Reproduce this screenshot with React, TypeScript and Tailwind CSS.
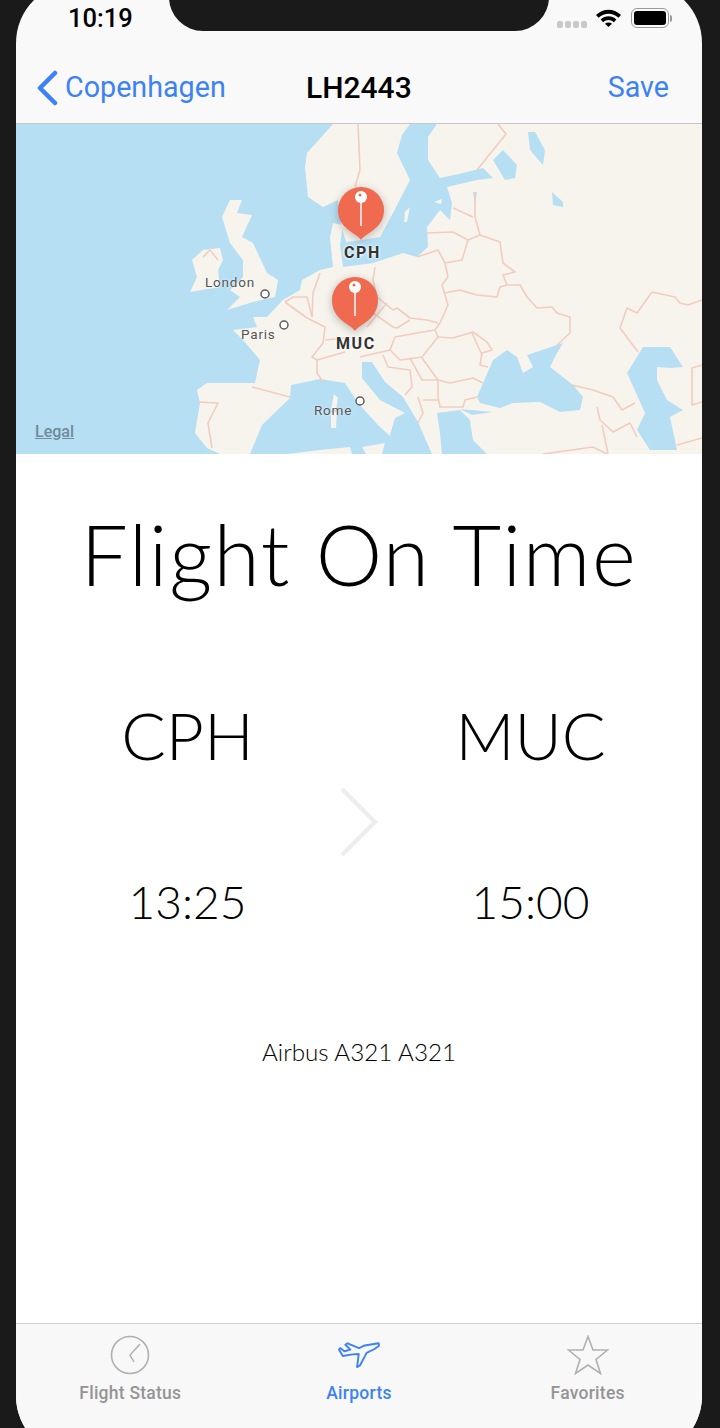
import React from 'react';

const FONT_UI = "font-['Roboto','Liberation_Sans',sans-serif]";
const FONT_BODY = "font-['Lato','Open_Sans',sans-serif]";

// --- MAP GEOMETRY (page coordinates) ---
const WATER = '#b7dff3';
const LAND = '#f7f4ee';
const BORDER = '#f1cdbf';

const land = [
  // continent, everything east is land
  '207,383 255,383 260,360 243,340 233,330 257,327 253,317 267,317 283,300 300,290 302,280 320,270 333,267 330,237 333,223 343,225 340,245 343,267 373,263 403,253 417,257 428,247 427,227 440,210 450,220 452,203 447,187 477,180 493,178 483,168 463,173 440,178 428,160 428,137 437,124 702,124 702,454 220,454 207,448 195,433 200,403 197,390',
  // scandinavia
  '333,124 307,153 305,167 308,197 323,207 338,200 341,225 346,242 362,240 380,237 393,213 410,180 397,153 402,135 410,124',
  // great britain
  '230,200 242,200 237,213 252,215 242,237 253,243 267,273 278,280 275,297 253,302 227,310 240,297 230,290 243,277 243,260 230,243 222,217',
  // ireland
  '203,250 220,248 223,260 218,270 220,287 190,292 197,277 192,260',
];

const seas = [
  // mediterranean
  '250,454 262,425 290,398 291,385 320,379 345,383 358,403 378,425 405,450 408,454',
  // adriatic + ionian
  '362,362 372,362 385,382 403,397 418,422 428,445 432,454 393,454 390,435 395,418 405,413 380,400 362,378',
  // aegean
  '437,413 460,410 470,420 473,440 487,454 442,454 440,433',
  '460,409 493,412 472,415',
  // black sea
  '477,397 493,360 507,350 517,357 523,373 533,367 527,355 563,343 557,353 550,367 573,385 583,397 580,410 560,412 540,402 513,403 500,408 480,403',
  // caspian
  '643,347 670,347 683,367 670,368 657,367 657,380 667,400 683,410 670,417 677,450 650,450 637,430 645,413 627,373',
  // lakes
  '493,160 503,150 517,165 515,178 505,180',
  '528,132 535,132 545,150 543,165 530,150',
  '552,192 563,202 563,207 553,205',
  '473,192 477,192 475,205',
];

const islands = [
  '334,394 338,398 336,410 331,410',
  '331,412 337,412 336,428 331,428',
  '362,447 385,443 382,454 366,454',
  '287,454 320,450 350,447 352,454',
  '405,212 410,207 407,222 404,222',
  '434,202 442,199 441,204',
  '487,454 470,425 480,415 560,412',
];

const borders = [
  '358,124 360,170 355,187',
  '498,124 506,134 477,170',
  '475,192 475,217 480,235',
  '453,208 473,217',
  '427,233 453,232 468,240 480,235',
  '480,235 500,242 503,263 515,272 503,275 507,285',
  '468,240 462,260 445,263 438,250 417,257',
  '445,263 448,277 442,285 448,305 440,323',
  '445,293 460,290 477,295 497,297 500,287 507,285 520,285 527,297 537,308 552,307 557,313 570,317 570,333 557,345',
  '375,267 373,280 377,297 393,310 397,308 410,318 427,320 438,323',
  '367,327 387,303',
  '373,313 393,327 397,328 410,320',
  '395,337 417,333 435,330 440,323',
  '395,337 390,350 400,360 422,357 438,337 435,330',
  '438,337 453,338 473,332 487,342 492,350 482,353 480,365 488,367',
  '472,333 482,355',
  '422,358 438,380 450,383 473,378 483,383',
  '438,380 438,397 440,407 463,407 465,400 477,397',
  '360,357 390,350',
  '383,355 388,367 410,370 412,387 405,395',
  '410,358 422,380 438,380',
  '418,397 423,413 418,423',
  '423,400 438,400',
  '572,385 593,390 613,397 622,410 635,403',
  '597,407 600,420 613,432 630,423 637,437',
  '602,425 608,454',
  '638,352 620,328 627,308 637,313 652,292 675,297 680,303 688,305 702,300',
  '702,365 692,368 692,405 702,402',
  '677,445 702,438',
  '543,454 593,447 607,454',
  '285,302 307,318 325,327 323,343 312,357 317,360 345,352',
  '317,360 317,373 323,382',
  '285,302 293,297 307,297 312,317',
  '312,317 313,293 320,273',
  '252,387 290,397',
  '198,402 218,403 208,423 212,448',
  '203,257 210,250 218,260',
  '325,340 345,338',
];

// --- MAP OVERLAYS ---
const Pin = ({ x, y, tip }: { x: number; y: number; tip: number }) => (
  <>
    <path
      d={`M${x} ${tip} C${x - 4} ${tip - 7} ${x - 23} ${tip - 11} ${x - 23} ${y} A23 23 0 1 1 ${x + 23} ${y} C${x + 23} ${tip - 11} ${x + 4} ${tip - 7} ${x} ${tip}Z`}
      fill="#f06a50"
      style={{ filter: 'drop-shadow(0 2px 4px rgba(0,0,0,.25))' }}
    />
    <line x1={x} y1={y - 8} x2={x} y2={y + 16} stroke="#fff" strokeWidth="1.5" />
    <circle cx={x} cy={y - 13} r="6" fill="#fff" />
    <circle cx={x - 1} cy={y - 15} r="1.5" fill="#f06a50" />
  </>
);

const City = ({ name, className }: { name: string; className: string }) => (
  <span className={`absolute text-[13.5px] font-normal tracking-[0.8px] leading-none text-[#555555] [text-shadow:0_0_2px_#fff] ${className}`}>
    {name}
  </span>
);

const Code = ({ name, className }: { name: string; className: string }) => (
  <span className={`absolute text-[16px] font-bold tracking-[1.6px] leading-none text-[#333333] [text-shadow:0_0_3px_#fff,0_0_3px_#fff] ${className}`}>
    {name}
  </span>
);

const FlightMap = () => (
  <div className="relative h-[330px] overflow-hidden">
    <svg viewBox="16 124 686 330" className="block h-full w-full">
      <rect x="16" y="124" width="686" height="330" fill={WATER} />
      {land.map(p => <polygon key={p} points={p} fill={LAND} />)}
      {seas.map(p => <polygon key={p} points={p} fill={WATER} />)}
      {islands.map(p => <polygon key={p} points={p} fill={LAND} />)}
      {borders.map(p => <polyline key={p} points={p} fill="none" stroke={BORDER} strokeWidth="1.6" strokeLinejoin="round" />)}
      <circle cx="265" cy="294" r="4" fill="#fff" stroke="#5c5c5c" strokeWidth="1.5" />
      <circle cx="284" cy="325" r="4" fill="#fff" stroke="#5c5c5c" strokeWidth="1.5" />
      <circle cx="360" cy="401" r="4" fill="#fff" stroke="#5c5c5c" strokeWidth="1.5" />
      <Pin x={361} y={210} tip={240} />
      <Pin x={355} y={300} tip={331} />
    </svg>
    <City name="London" className="left-[189px] top-[152px]" />
    <City name="Paris" className="left-[225px] top-[204px] text-[#6b6b6b]" />
    <City name="Rome" className="left-[298px] top-[280px]" />
    <Code name="CPH" className="left-[328px] top-[121px]" />
    <Code name="MUC" className="left-[320px] top-[212px]" />
    <span className="absolute left-[19px] top-[300px] text-[16px] font-medium leading-none text-[#6f8a99] underline">Legal</span>
  </div>
);

// --- STATUS BAR ---
const StatusBar = () => (
  <div className="relative h-[65px]">
    <span className="absolute left-[52px] top-[6px] text-[25.5px] font-medium leading-none text-black">10:19</span>
    <div className="absolute left-[541px] top-[21px] flex gap-[2px]">
      {[0, 1, 2, 3].map(i => <span key={i} className="h-[7px] w-[6px] rounded-[2px] bg-[#c9c9c9]" />)}
    </div>
    <svg viewBox="0 0 27 19" className="absolute left-[579px] top-[8px] h-[19px] w-[27px]">
      <path d="M1 7C8.5 0 18.5 0 26 7L23.4 9.8C17.5 4.4 9.5 4.4 3.6 9.8Z" />
      <path d="M5.6 11.5C10.3 7.3 16.7 7.3 21.4 11.5L18.8 14.2C15.5 11.4 11.5 11.4 8.2 14.2Z" />
      <path d="M10 15.8C12 14.2 15 14.2 17 15.8L13.5 19Z" />
    </svg>
    <div className="absolute left-[615px] top-[8px] flex items-center">
      <div className="flex h-[20px] w-[38px] items-center rounded-[6px] border border-[#999999] p-[2px]">
        <div className="h-full w-full rounded-[3px] bg-black" />
      </div>
      <div className="ml-[1px] h-[7px] w-[2px] rounded-r-[2px] bg-[#999999]" />
    </div>
  </div>
);

// --- NAV BAR ---
const NavBar = () => (
  <div className="relative flex h-[59px] items-center justify-between border-b border-[#c6c6c8] pb-[13px] pl-[20px] pr-[33px] text-[28.7px] leading-none">
    <div className="flex items-center gap-[7px] text-[#3c82f6]">
      <svg viewBox="0 0 22 36" className="h-[36px] w-[22px]">
        <path d="M19 3L4 18L19 33" fill="none" stroke="currentColor" strokeWidth="4.5" strokeLinecap="round" strokeLinejoin="round" />
      </svg>
      <span>Copenhagen</span>
    </div>
    <span className="absolute left-[290px] text-[30px] font-medium text-black">LH2443</span>
    <span className="text-[#3c82f6]">Save</span>
  </div>
);

// --- TAB BAR ---
const ClockIcon = () => (
  <svg viewBox="0 0 40 40" className="h-[40px] w-[40px]" fill="none" stroke="#b0b0b0">
    <circle cx="20" cy="20" r="18.5" strokeWidth="1.6" />
    <path d="M30 9L20 20L24 27" strokeWidth="1.5" />
  </svg>
);

const PlaneIcon = () => (
  <svg viewBox="0 0 44 29" className="h-[29px] w-[42px]" fill="none" stroke="#3c82f6" strokeWidth="2" strokeLinejoin="round">
    <path d="M42.6 1.7L28 4L22 6.7L10 1.7L7.7 3.3L13 8.3L6.7 10L2.3 6.7L1 8.3L5 15L15 13.3L21.7 13L20 26.7L23 25L30 11.7L38.3 7.7L43 4.3Z" />
  </svg>
);

const StarIcon = () => (
  <svg viewBox="0 0 42 40" className="h-[40px] w-[42px]" fill="none" stroke="#b0b0b0" strokeWidth="1.6" strokeLinejoin="miter">
    <path d="M21 1.5L26 15H40.5L29 24.5L33.5 38.5L21 30L8.5 38.5L13 24.5L1.5 15H16Z" />
  </svg>
);

const Tab = ({ icon, label, active }: { icon: React.ReactNode; label: string; active?: boolean }) => (
  <div className="flex flex-col items-center">
    <div className="flex h-[42px] items-center">{icon}</div>
    <span className={`mt-[6px] text-[17.5px] font-medium leading-[22px] tracking-[0.25px] ${active ? 'text-[#3c82f6]' : 'text-[#949494]'}`}>{label}</span>
  </div>
);

const TabBar = () => (
  <div className="grid flex-1 grid-cols-3 border-t border-[#cfcfcf] bg-[#f8f8f8] pt-[10px]">
    <Tab icon={<ClockIcon />} label="Flight Status" />
    <Tab icon={<PlaneIcon />} label="Airports" active />
    <Tab icon={<StarIcon />} label="Favorites" />
  </div>
);

// --- FLIGHT DETAILS ---
const FlightDetails = () => (
  <div className={`relative h-[869px] bg-white text-center text-black ${FONT_BODY}`}>
    <h1 className="pt-[55px] text-[84px] font-light leading-[90px] tracking-[1.6px]">Flight On Time</h1>
    <div className="mt-[101px] grid grid-cols-2">
      <div>
        <div className="text-[66px] font-light leading-[70px]">CPH</div>
        <div className="mt-[102px] text-[46px] font-light leading-[60px]">13:25</div>
      </div>
      <div>
        <div className="text-[65px] font-light leading-[70px]">MUC</div>
        <div className="mt-[102px] text-[46px] font-light leading-[60px]">15:00</div>
      </div>
    </div>
    <svg viewBox="0 0 38 70" className="absolute left-[324px] top-[333px] h-[70px] w-[38px]">
      <path d="M2 2L35 35L2 68" fill="none" stroke="#ededed" strokeWidth="4" />
    </svg>
    <div className="mt-[104px] text-[24.2px] font-light leading-[32px]">Airbus A321 A321</div>
  </div>
);

export default function App() {
  return (
    <div className={`h-[1428px] overflow-hidden bg-[#1a1a1a] pl-[16px] pr-[18px] ${FONT_UI}`}>
      <div className="relative -mt-[17px] flex h-[1473px] flex-col overflow-hidden rounded-[60px] bg-[#f9f9f9]">
        <div className="h-[17px]" />
        {/* notch */}
        <div className="absolute left-[153px] top-0 h-[48px] w-[380px] rounded-b-[34px] bg-[#1a1a1a]" />
        <StatusBar />
        <NavBar />
        <FlightMap />
        <FlightDetails />
        <TabBar />
      </div>
    </div>
  );
}
